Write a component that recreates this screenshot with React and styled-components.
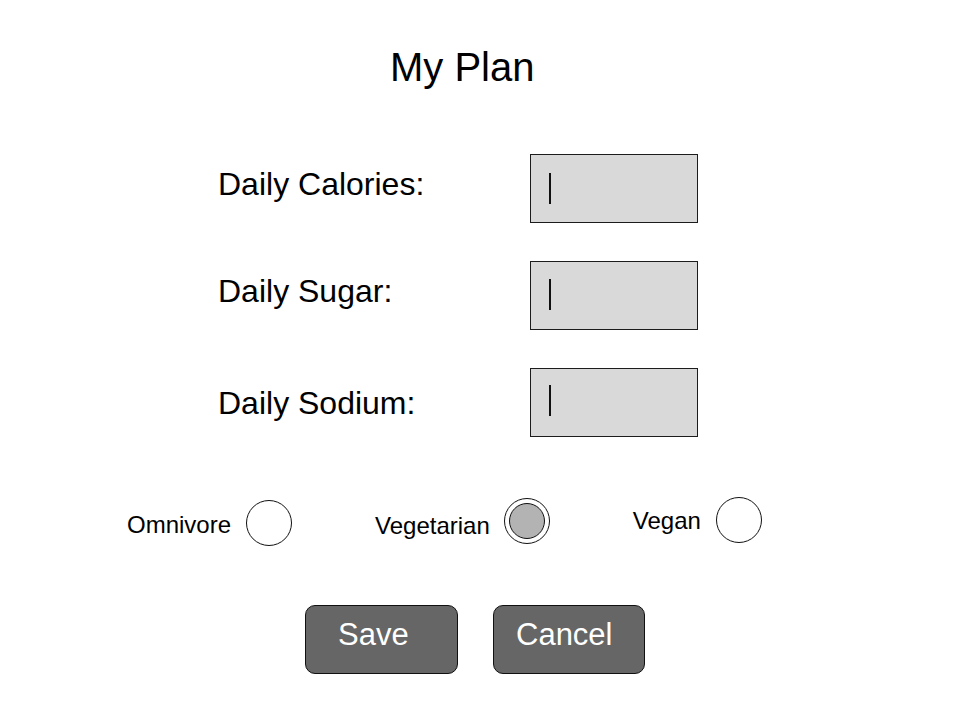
import React from "react";
import styled, { createGlobalStyle } from "styled-components";

const GlobalStyle = createGlobalStyle`
  html, body {
    margin: 0;
    padding: 0;
    background: #ffffff;
  }
  body {
    font-family: "Liberation Sans", Arial, Helvetica, sans-serif;
    color: #000000;
  }
`;

const Page = styled.div`
  width: 960px;
  height: 720px;
  box-sizing: border-box;
  padding-top: 47px;
  background: #ffffff;
  overflow: hidden;
`;

const Title = styled.h1`
  margin: 0 0 0 390px;
  font-size: 40px;
  line-height: 1;
  font-weight: normal;
`;

const Form = styled.div`
  margin-top: 67px;
  padding-left: 218px;
  display: flex;
  flex-direction: column;
  gap: 38px;
`;

const Row = styled.div`
  display: flex;
  align-items: flex-start;
`;

const Label = styled.label`
  width: 312px;
  padding-top: ${(p) => p.$offset}px;
  font-size: 32px;
  line-height: 1;
`;

const Field = styled.div`
  width: 168px;
  height: 69px;
  box-sizing: border-box;
  border: 1px solid #1c1c1c;
  background: #d9d9d9;
  padding: ${(p) => p.$caretTop}px 0 0 18px;
`;

const Caret = styled.span`
  display: block;
  width: 2px;
  height: 31px;
  background: #111111;
`;

const RadioRow = styled.div`
  margin-top: 60px;
  padding-left: 127px;
  display: flex;
  align-items: flex-start;
  gap: 83px;
`;

const RadioOption = styled.div`
  display: flex;
  align-items: flex-start;
  gap: ${(p) => p.$gap}px;
  margin-top: ${(p) => p.$top}px;
`;

const RadioText = styled.span`
  padding-top: ${(p) => p.$drop}px;
  font-size: 24px;
  line-height: 1;
`;

const Circle = styled.span`
  width: 46px;
  height: 46px;
  box-sizing: border-box;
  border: 1px solid #111111;
  border-radius: 50%;
  background: #ffffff;
  display: flex;
  align-items: center;
  justify-content: center;
`;

const Dot = styled.span`
  width: 36px;
  height: 36px;
  box-sizing: border-box;
  border: 1px solid #111111;
  border-radius: 50%;
  background: #b3b3b3;
`;

const ButtonRow = styled.div`
  margin-top: 59px;
  padding-left: 305px;
  display: flex;
  gap: 35px;
`;

const Button = styled.button`
  width: ${(p) => p.$w}px;
  height: 69px;
  box-sizing: border-box;
  margin: 0;
  border: 1px solid #111111;
  border-radius: 10px;
  background: #666666;
  color: #ffffff;
  font-family: inherit;
  font-size: 31px;
  line-height: 1;
  text-align: left;
  display: flex;
  align-items: flex-start;
  padding: 13px 0 0 ${(p) => p.$pl}px;
  cursor: pointer;
`;

const fields = [
  { label: "Daily Calories:", offset: 14, caret: 18 },
  { label: "Daily Sugar:", offset: 14, caret: 17 },
  { label: "Daily Sodium:", offset: 19, caret: 16 },
];

const options = [
  { label: "Omnivore", top: 3, drop: 13, gap: 15, selected: false },
  { label: "Vegetarian", top: 1, drop: 16, gap: 14, selected: true },
  { label: "Vegan", top: 0, drop: 12, gap: 15, selected: false },
];

export default function App() {
  return (
    <>
      <GlobalStyle />
      <Page>
        <Title>My Plan</Title>
        <Form>
          {fields.map((f) => (
            <Row key={f.label}>
              <Label $offset={f.offset}>{f.label}</Label>
              <Field $caretTop={f.caret}>
                <Caret />
              </Field>
            </Row>
          ))}
        </Form>
        <RadioRow>
          {options.map((o) => (
            <RadioOption key={o.label} $top={o.top} $gap={o.gap}>
              <RadioText $drop={o.drop}>{o.label}</RadioText>
              <Circle>{o.selected && <Dot />}</Circle>
            </RadioOption>
          ))}
        </RadioRow>
        <ButtonRow>
          <Button $w={153} $pl={32}>Save</Button>
          <Button $w={152} $pl={22}>Cancel</Button>
        </ButtonRow>
      </Page>
    </>
  );
}
